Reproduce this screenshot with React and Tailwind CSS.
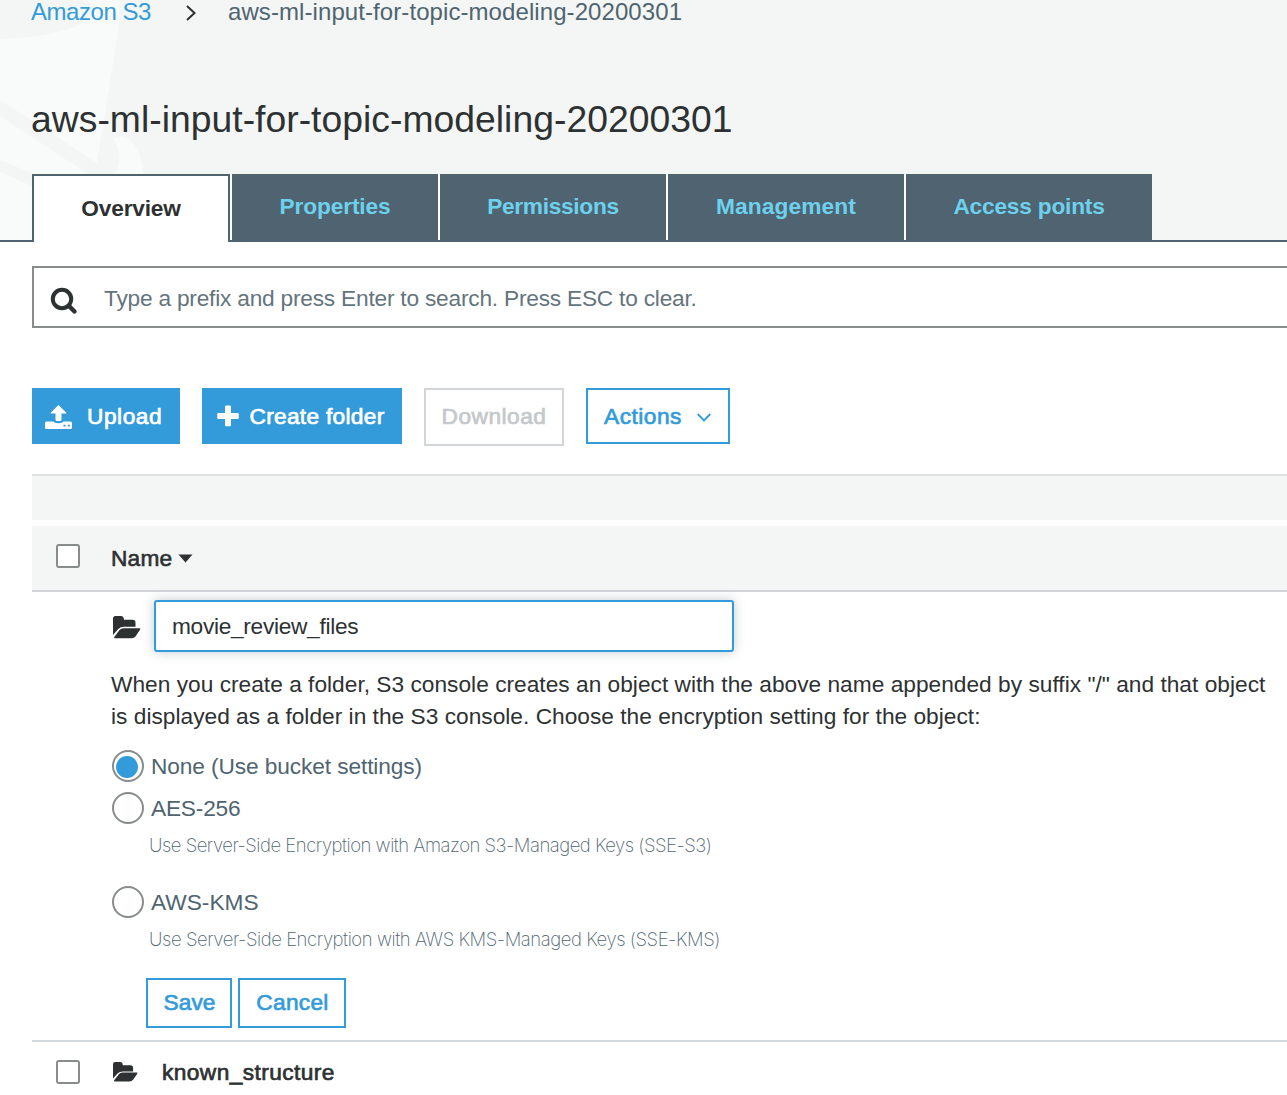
function Watermark() {
  return (
    <svg className="absolute left-0 top-0" width="160" height="240" viewBox="0 0 160 240" aria-hidden="true">
      <g fill="#f9fafa">
        <path d="M0 0H119.500Q120 15 118 32L97 163L0 100Z" />
        <path d="M0 116L88 174H32V173L0 160Z" />
        <path d="M0 172L32 186V240H0Z" />
        <path d="M113 139C127 130 142 147 143 174H114C122 166 121 150 113 139Z" />
      </g>
      <ellipse cx="-8" cy="11" rx="100" ry="28" fill="#f4f6f6" />
    </svg>
  );
}

function Chevron({ className, d, w, h, stroke = 2 }) {
  return (
    <svg className={className} width={w} height={h} viewBox={`0 0 ${w} ${h}`} fill="none" stroke="currentColor" strokeWidth={stroke}>
      <path d={d} />
    </svg>
  );
}

function SearchIcon() {
  return (
    <svg width="28" height="28" viewBox="0 0 28 28" fill="none" stroke="currentColor">
      <circle cx="12" cy="12" r="9.2" strokeWidth="4" />
      <path d="M19 19L24.5 24.5" strokeWidth="4.4" strokeLinecap="round" />
    </svg>
  );
}

function UploadIcon() {
  return (
    <svg width="28" height="26" viewBox="0 0 28 26" fill="currentColor">
      <path d="M13.500 1L21.300 8.700Q21.800 9.500 20.800 9.500H16.500V15.500Q16.500 17 15 17H12Q10.500 17 10.500 15.500V9.500H6.200Q5.200 9.500 5.700 8.700Z" />
      <path
        fillRule="evenodd"
        d="M1.500 17.500H8.500Q9.500 19.200 13.500 19.200T18.500 17.500H25.500Q27 17.500 27 19V23.500Q27 25 25.500 25H1.500Q0 25 0 23.500V19Q0 17.500 1.500 17.500ZM18.500 20.800V22.500H20.500V20.800ZM22.800 20.800V22.500H24.800V20.800Z"
      />
    </svg>
  );
}

function PlusIcon() {
  return (
    <svg width="22" height="22" viewBox="0 0 22 22" fill="currentColor">
      <path d="M9 0.500H13Q14 0.500 14 1.500V8H20.500Q21.800 8 21.800 9V13Q21.800 14 20.500 14H14V20Q14 21.300 13 21.300H9Q8 21.300 8 20V14H1.500Q0.200 14 0.200 13V9Q0.200 8 1.500 8H8V1.500Q8 0.500 9 0.500Z" />
    </svg>
  );
}

function FolderIcon({ width, height }) {
  return (
    <svg width={width} height={height} viewBox="0 0 28 23" fill="currentColor" preserveAspectRatio="none">
      <path d="M0 19V2.500Q0 0 2.500 0H8Q10.800 0 11 3.800H19.500Q22.500 3.800 22.500 7V10.800H11Q7.500 10.800 5.300 13Z" />
      <path d="M1.800 22.300Q0.500 22.300 1.500 20.800L6.500 14Q8 12.200 10.500 12.200H26.500Q28 12.200 27 13.700L22.500 20.500Q21 22.300 18.500 22.300Z" />
    </svg>
  );
}

function Checkbox() {
  return <span className="block size-6 shrink-0 rounded-[3px] border-2 border-[#888c8c] bg-white" />;
}

function Radio({ checked }) {
  return (
    <span className="flex size-8 shrink-0 items-center justify-center rounded-full border-2 border-[#888c8c] bg-white">
      {checked && <span className="mr-[2px] mt-[2px] size-[22px] rounded-full bg-[#339bd9]" />}
    </span>
  );
}

const tabs = [
  { label: "Properties", cls: "w-[206px]", text: "tracking-[-0.1px]" },
  { label: "Permissions", cls: "w-[226px]", text: "tracking-[-0.3px]" },
  { label: "Management", cls: "w-[236px]", text: "tracking-[0.15px]" },
  { label: "Access points", cls: "w-[246px]", text: "tracking-[-0.2px]" },
];

export default function App() {
  return (
    <div className="h-[1095px] w-full overflow-hidden bg-white font-['Liberation_Sans',Arial,sans-serif] text-[22.7px] leading-8 text-[#2d3132]">
      <header className="relative flex h-[242px] flex-col border-b-2 border-[#4f6470] bg-[#f4f6f6]">
        <Watermark />
        <nav className="relative flex h-6 items-center pl-[31px] text-[24px] leading-6 whitespace-nowrap">
          <a className="w-[155px] tracking-[-0.45px] text-[#339bd9]">Amazon S3</a>
          <Chevron className="mt-[2px] mr-[32px]" w={10} h={16} d="M1 1L8.500 8L1 15" />
          <span className="text-[#4f6470] tracking-[0.08px]">aws-ml-input-for-topic-modeling-20200301</span>
        </nav>
        <h1 className="relative mt-[71px] pl-[31px] text-[37.3px] leading-[48px] tracking-[0.02px] whitespace-nowrap">
          aws-ml-input-for-topic-modeling-20200301
        </h1>
        <div className="relative mt-[31px] -mb-[2px] ml-8 flex h-[68px] gap-[2px] font-bold">
          <div className="flex w-[198px] items-center justify-center border-2 border-b-0 border-[#4f6470] bg-white pb-[2px] tracking-[-0.2px]">Overview</div>
          {tabs.map((t) => (
            <div key={t.label} className="relative flex">
              <span className="absolute top-0 -left-[2px] h-[66px] w-[2px] bg-white" />
              <div className={`flex items-center justify-center bg-[#4f6470] pb-1 text-[#6dd1ee] ${t.cls} ${t.text}`}>{t.label}</div>
            </div>
          ))}
        </div>
      </header>

      <main className="pl-8 whitespace-nowrap">
        <div className="mt-6 flex h-[62px] items-center border-2 border-r-0 border-[#888c8c]">
          <span className="mt-[7px] ml-4 w-[54px]">
            <SearchIcon />
          </span>
          <span className="mt-[2px] tracking-[-0.21px] text-[#64747d]">Type a prefix and press Enter to search. Press ESC to clear.</span>
        </div>

        <div className="mt-[60px] flex items-start gap-[22px] [-webkit-text-stroke:0.7px_currentColor]">
          <button className="flex h-14 w-[148px] items-center bg-[#339bd9] pl-[13px] tracking-[0.55px] text-white">
            <span className="mt-[2px] mr-[14px] [-webkit-text-stroke:0]">
              <UploadIcon />
            </span>
            Upload
          </button>
          <button className="flex h-14 w-[200px] items-center bg-[#339bd9] pl-[15px] tracking-[0.3px] text-white">
            <span className="mr-[10.5px]">
              <PlusIcon />
            </span>
            Create folder
          </button>
          <button className="h-[58px] w-[140px] border-2 border-[#d3d6d9] pb-[2px] tracking-[0.5px] text-[#c4c8ca]">Download</button>
          <button className="flex h-14 w-[144px] items-center border-2 border-[#339bd9] pl-4 tracking-[0.5px] text-[#339bd9]">
            Actions
            <Chevron className="mt-[2px] ml-[15px]" w={14} h={9} d="M0.700 1L7 7.500L13.300 1" stroke={1.8} />
          </button>
        </div>

        <div className="mt-[28px] h-[46px] border-t-2 border-[#dfe2e2] bg-[#f4f6f6]" />
        <div className="mt-[6px] flex h-[66px] items-center border-b-2 border-[#d3d6d9] bg-[#f4f6f6] pl-6">
          <span className="-mt-1">
            <Checkbox />
          </span>
          <span className="ml-[31px] tracking-[0.2px] [-webkit-text-stroke:0.6px_currentColor]">Name</span>
          <svg className="ml-[6px]" width="15" height="9" viewBox="0 0 15 9" fill="currentColor">
            <path d="M0.500 0.500H14.500L7.500 8.500Z" />
          </svg>
        </div>

        <section className="h-[450px] border-b-2 border-[#d3d8dc] pt-2 pl-[79px]">
          <div className="flex items-center">
            <span className="mt-[2px] ml-[2px] w-[41px]">
              <FolderIcon width={28} height={23} />
            </span>
            <div className="flex h-[52px] w-[580px] items-center rounded-[3px] border-2 border-[#339bd9] bg-white pl-4 tracking-[-0.3px] shadow-[0_0_12px_rgba(70,90,95,0.32)]">
              movie_review_files
            </div>
          </div>
          <p className="mt-[16px] tracking-[0.02px]">
            When you create a folder, S3 console creates an object with the above name appended by suffix "/" and that object
            <br />
            is displayed as a folder in the S3 console. Choose the encryption setting for the object:
          </p>
          <div className="mt-[18px] flex items-center gap-[7px] pl-[1px] tracking-[-0.1px] text-[#4f6470]">
            <Radio checked />
            None (Use bucket settings)
          </div>
          <div className="mt-[10px] flex items-center gap-[7px] pl-[1px] tracking-[-0.2px] text-[#4f6470]">
            <Radio />
            AES-256
          </div>
          <p className="mt-[5px] pl-[38px] font-[Inter,sans-serif] text-[18.5px] font-extralight tracking-[-0.49px] text-[#4f6470]">
            Use Server-Side Encryption with Amazon S3-Managed Keys (SSE-S3)
          </p>
          <div className="mt-[25px] flex items-center gap-[7px] pl-[1px] text-[#4f6470]">
            <Radio />
            AWS-KMS
          </div>
          <p className="mt-[5px] pl-[38px] font-[Inter,sans-serif] text-[18.5px] font-extralight tracking-[-0.44px] text-[#4f6470]">
            Use Server-Side Encryption with AWS KMS-Managed Keys (SSE-KMS)
          </p>
          <div className="mt-[23px] ml-[35px] flex gap-[6px] text-[#339bd9] [-webkit-text-stroke:0.7px_currentColor]">
            <button className="h-[50px] w-[86px] border-2 border-[#339bd9] pb-[2px] pl-[1px] tracking-[0.1px]">Save</button>
            <button className="h-[50px] w-[108px] border-2 border-[#339bd9] pb-[2px] pl-[1px] tracking-[0.3px]">Cancel</button>
          </div>
        </section>

        <div className="flex h-[60px] items-center pl-6">
          <Checkbox />
          <span className="ml-[33px] w-[49px]">
            <FolderIcon width={25} height={20} />
          </span>
          <span className="tracking-[0.42px] [-webkit-text-stroke:0.7px_currentColor]">known_structure</span>
        </div>
      </main>
    </div>
  );
}
